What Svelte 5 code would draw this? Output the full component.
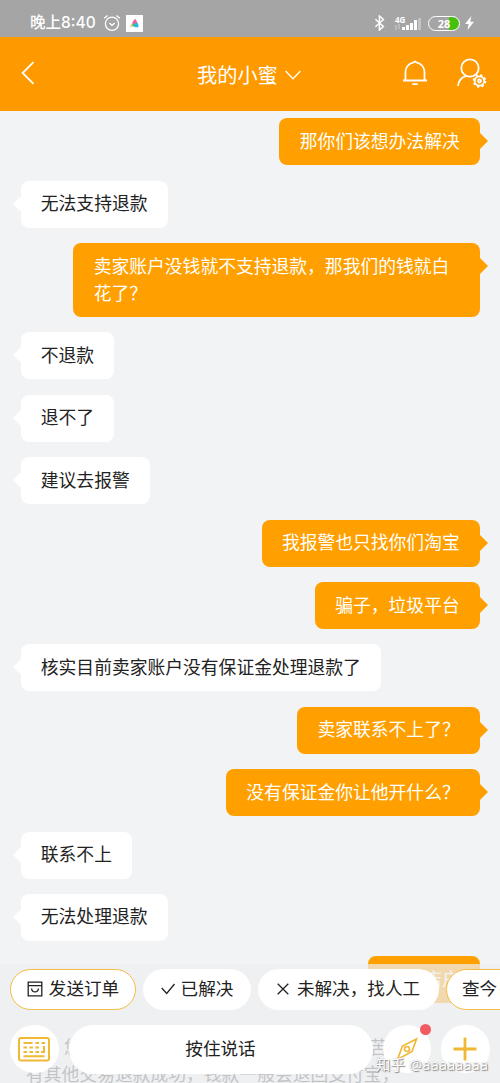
<script lang="ts">
    type Message = {
        from: 'me' | 'bot';
        text: string;
    };

    const messages: Message[] = [
        { from: 'me', text: '那你们该想办法解决' },
        { from: 'bot', text: '无法支持退款' },
        { from: 'me', text: '卖家账户没钱就不支持退款，那我们的钱就白花了？' },
        { from: 'bot', text: '不退款' },
        { from: 'bot', text: '退不了' },
        { from: 'bot', text: '建议去报警' },
        { from: 'me', text: '我报警也只找你们淘宝' },
        { from: 'me', text: '骗子，垃圾平台' },
        { from: 'bot', text: '核实目前卖家账户没有保证金处理退款了' },
        { from: 'me', text: '卖家联系不上了？' },
        { from: 'me', text: '没有保证金你让他开什么？' },
        { from: 'bot', text: '联系不上' },
        { from: 'bot', text: '无法处理退款' },
        { from: 'me', text: '联系店户' }
    ];

    const signalBars = [3, 5, 7.5, 10, 12];
</script>

<div class="screen">
    <div class="status">
        <span class="time">晚上8:40</span>
        <svg class="alarm" width="18" height="18" viewBox="0 0 18 18">
            <circle cx="9" cy="9.8" r="6.6" />
            <path d="M1.2 4.2 4.6 1.4M16.8 4.2 13.4 1.4M6.4 9l2.6 2.3L11.8 9" />
        </svg>
        <svg width="17" height="17" viewBox="0 0 17 17">
            <rect width="17" height="17" fill="#fff" />
            <path d="M8.7 4Q10 4 10.500 6L12 9 7 9.500 6 8Z" fill="#f0619a" />
            <path d="M8 9 11 7.500Q14 12 11.500 12.300H9Q7 11.500 8 9Z" fill="#20bfe8" />
            <circle cx="7.400" cy="9.900" r="1.500" fill="#26c3a0" />
            <path d="M4 12.300 6 8.300 7 11z" fill="#f6bf3c" />
        </svg>
        <div class="status-right">
            <svg class="bluetooth" width="11" height="16" viewBox="0 0 11 16">
                <path d="m1.4 4.3 8 7.2-4 3.5V1l4 3.5-8 7.2" />
            </svg>
            <div class="network">
                <div class="network-type">
                    <span>4G</span>
                    <svg width="6" height="6" viewBox="0 0 6 6"><path d="M1 6V1M4 0v5" /></svg>
                </div>
                <div class="bars">
                    {#each signalBars as height, i}
                        <i class:dim={i === 4} style="height: {height}px"></i>
                    {/each}
                </div>
            </div>
            <div class="battery"><span>28</span></div>
            <svg class="bolt" width="9" height="14" viewBox="0 0 9 14">
                <path d="M6.4 0 0 8h3.6L2.5 14 9 5.8H5.2z" />
            </svg>
        </div>
    </div>

    <header>
        <svg class="back" width="14" height="24" viewBox="0 0 14 24">
            <path d="M12.5 1.2 1.6 12l10.9 10.8" />
        </svg>
        <div class="title">
            <span>我的小蜜</span>
            <svg width="16" height="10" viewBox="0 0 16 10"><path d="m.6 1 7.4 7.7L15.4 1" /></svg>
        </div>
        <svg class="bell" width="26" height="26" viewBox="0 0 26 26">
            <path d="M3.500 20.500V12c0-5 3.500-8.500 7.500-9.300L13 1.500l2 1.200c4 .8 7.500 4.300 7.500 9.300v8.500M1 20.500h24M10.300 24.200h5.400" />
        </svg>
        <svg class="user" width="30" height="30" viewBox="0 0 30 30">
            <circle cx="13" cy="10" r="8.700" />
            <path d="M1 28c.5-4.800 3.700-9 8.500-10.200" />
            <circle cx="22.500" cy="23" r="4.700" />
            <circle cx="22.500" cy="23" r="1.500" />
            <circle class="teeth" cx="22.500" cy="23" r="5.900" />
        </svg>
    </header>

    <main>
        {#each messages as message}
            <div class="row {message.from}">
                <div class="bubble">{message.text}</div>
            </div>
        {/each}
        <div class="notice">
            <p><span>您</span><span>苦</span></p>
            <p>有其他交易退款成功，钱款一般会退回支付宝，</p>
        </div>
    </main>

    <footer>
        <div class="chips">
            <button class="outlined order">
                <svg width="16" height="16" viewBox="0 0 16 16">
                    <path d="M1.200 1.200h13.600v13.600H1.200zM1.200 4.700h13.600M4.600 7.500c.2 4.600 6.600 4.600 6.800 0" />
                </svg>
                <span>发送订单</span>
            </button>
            <button class="solved">
                <svg width="14" height="12" viewBox="0 0 14 12"><path d="m.7 5 5 5.500L13.500 1" /></svg>
                <span>已解决</span>
            </button>
            <button class="unsolved">
                <svg width="12" height="12" viewBox="0 0 12 12"><path d="m.7.7 10.600 10.600M11.300.7.700 11.300" /></svg>
                <span>未解决，找人工</span>
            </button>
            <button class="outlined more"><span>查今日</span></button>
        </div>
        <div class="inputs">
            <button class="round">
                <svg width="32" height="25" viewBox="0 0 32 25">
                    <rect x="1" y="1" width="30" height="22.500" rx="2" />
                    <path d="M5.500 6h9M17.500 6h3.500M23.500 6h3.500" />
                    <path d="M5.500 10.500H9M11.500 10.500H15M17.500 10.500H21" />
                    <path d="M5.500 15H9M11.500 15H15M17.500 15H21" />
                    <path d="M26 9v6h-3M5.500 19.300h21" />
                </svg>
            </button>
            <button class="talk"><span>按住说话</span></button>
            <button class="round compass">
                <svg width="22" height="24" viewBox="0 0 22 24">
                    <path d="M20.500 2 16 14.500 1.500 22.500 6.500 9Z" />
                    <circle cx="11" cy="12" r="2.500" />
                </svg>
                <i class="dot"></i>
            </button>
            <button class="round">
                <svg width="24" height="24" viewBox="0 0 24 24"><path class="plus" d="M12 .5v23M.5 12h23" /></svg>
            </button>
        </div>
    </footer>

    <span class="watermark">知乎 @aaaaaaaa</span>
</div>

<style>
    :global(body) {
        background: #f2f3f5;
    }

    .screen {
        position: relative;
        display: flex;
        flex-direction: column;
        width: 500px;
        height: 1083px;
        overflow: hidden;
        background: #f2f3f5;
        color: #222;
        font-family: "Noto Sans CJK SC", "Noto Sans", sans-serif;
    }

    svg {
        display: block;
        flex: none;
        fill: none;
    }

    .status {
        flex: none;
        display: flex;
        align-items: center;
        height: 37px;
        box-sizing: border-box;
        padding: 9px 26px 0 30px;
        background: #a5a5a5;
        color: #fff;
    }

    .time {
        width: 65px;
        margin-right: 8px;
        font-family: Inter, "Noto Sans CJK SC", sans-serif;
        font-size: 15.500px;
        font-weight: 500;
        line-height: 20px;
        white-space: nowrap;
    }

    .alarm {
        margin-right: 5px;
        stroke: #fff;
        stroke-width: 1.300;
    }

    .status-right {
        display: flex;
        align-items: center;
        margin-left: auto;
    }

    .bluetooth {
        margin-right: 10px;
        stroke: #fff;
        stroke-width: 1.500;
    }

    .network {
        display: flex;
        align-items: flex-end;
        width: 26px;
        height: 16px;
        margin-right: 7px;
        margin-bottom: 2px;
    }

    .network-type {
        width: 7px;
        font: 700 8px/9px "Open Sans", sans-serif;
    }

    .network-type svg {
        stroke: #d0d0d0;
    }

    .bars {
        display: flex;
        align-items: flex-end;
        gap: 1.500px;
    }

    .bars i {
        width: 2.500px;
        background: #fff;
    }

    .bars .dim {
        background: #c4c4c4;
    }

    .battery {
        width: 32px;
        height: 15px;
        box-sizing: border-box;
        margin-right: 5px;
        border: 1.500px solid #fff;
        border-radius: 7.500px;
        background: linear-gradient(to right, transparent 67%, #43c10b 67%);
        background-clip: padding-box;
        font: 700 11px/13px "Open Sans", sans-serif;
        text-align: center;
    }

    .bolt {
        fill: #fff;
    }

    header {
        flex: none;
        display: flex;
        align-items: center;
        height: 74px;
        box-sizing: border-box;
        padding: 0 13px 2px 21px;
        background: #ff9900;
        color: #fff;
    }

    header svg {
        stroke: #fff;
        stroke-width: 1.800;
    }

    .title {
        display: flex;
        align-items: center;
        gap: 7px;
        margin: 4px auto 0 162px;
        font-size: 20.200px;
        line-height: 30px;
    }

    .title svg {
        stroke-width: 1.300;
    }

    .bell {
        margin-right: 29px;
    }

    header .teeth {
        stroke-width: 1.800;
        stroke-dasharray: 2.300 2.330;
    }

    main {
        flex: 1;
        display: flex;
        flex-direction: column;
        gap: 15.400px;
        min-height: 0;
        padding: 7.300px 20px 0;
    }

    .row {
        flex: none;
        display: flex;
    }

    .row.bot {
        padding-left: 0.500px;
    }

    .row.me {
        justify-content: flex-end;
    }

    .bubble {
        position: relative;
        max-width: 366px;
        box-sizing: content-box;
        padding: 8.500px 20.300px 11.500px;
        border-radius: 8px;
        background: #fff;
        font-size: 17.800px;
        line-height: 27px;
    }

    .me .bubble {
        background: #ff9f00;
        color: #fff;
    }

    .bubble::after {
        content: '';
        position: absolute;
        top: 14px;
        left: -8px;
        border: 9px solid transparent;
        border-left-width: 0;
        border-right-color: #fff;
    }

    .me .bubble::after {
        right: -8px;
        left: auto;
        border-width: 9px 0 9px 9px;
        border-left-color: #ff9f00;
    }

    .notice {
        flex: none;
        margin: 14px -20px 0 6px;
        color: #555;
        font-size: 17.800px;
        line-height: 27px;
        white-space: nowrap;
    }

    .notice p {
        margin: 0;
    }

    .notice p:first-child {
        display: flex;
        gap: 288px;
        padding-left: 38px;
    }

    footer {
        position: absolute;
        right: 0;
        bottom: 0;
        left: 0;
        height: 119px;
        background: rgba(237, 239, 241, 0.720);
    }

    button {
        display: flex;
        align-items: center;
        justify-content: center;
        flex: none;
        box-sizing: border-box;
        padding: 0;
        border: 0;
        background: #fff;
        color: #222;
        font: inherit;
        font-size: 17.600px;
        white-space: nowrap;
    }

    button span {
        padding-bottom: 3px;
    }

    .chips {
        display: flex;
        gap: 7px;
        padding: 4.500px 0 0 10px;
    }

    .chips button {
        height: 41px;
        gap: 6px;
        border-radius: 21px;
    }

    .chips svg {
        stroke: #222;
        stroke-width: 1.300;
    }

    .chips .outlined {
        border: 1.500px solid #f2bd42;
    }

    .chips .order {
        width: 126px;
    }

    .chips .solved {
        width: 108px;
    }

    .chips .unsolved {
        width: 181px;
        gap: 8px;
    }

    .chips .more {
        width: 120px;
        justify-content: flex-start;
        padding-left: 15px;
    }

    .inputs {
        display: flex;
        align-items: center;
        gap: 10px;
        padding: 15px 0 0 10px;
    }

    .inputs svg {
        stroke: #f0b935;
        stroke-width: 2;
    }

    .round {
        position: relative;
        width: 48.500px;
        height: 48.500px;
        border-radius: 50%;
    }

    .inputs .compass svg {
        stroke-width: 1.700;
    }

    .round .plus {
        stroke-width: 2.800;
    }

    .talk {
        width: 304px;
        height: 49px;
        border-radius: 25px;
    }

    .dot {
        position: absolute;
        top: -1px;
        right: 0;
        width: 11px;
        height: 11px;
        border-radius: 50%;
        background: #f25b5f;
    }

    .watermark {
        position: absolute;
        right: 12px;
        bottom: 8px;
        color: #fff;
        font-family: "Open Sans", "Noto Sans CJK SC", sans-serif;
        font-size: 14.800px;
        line-height: 22px;
        text-shadow: 1px 1px 1px #888, 0 0 1px #aaa;
    }
</style>
